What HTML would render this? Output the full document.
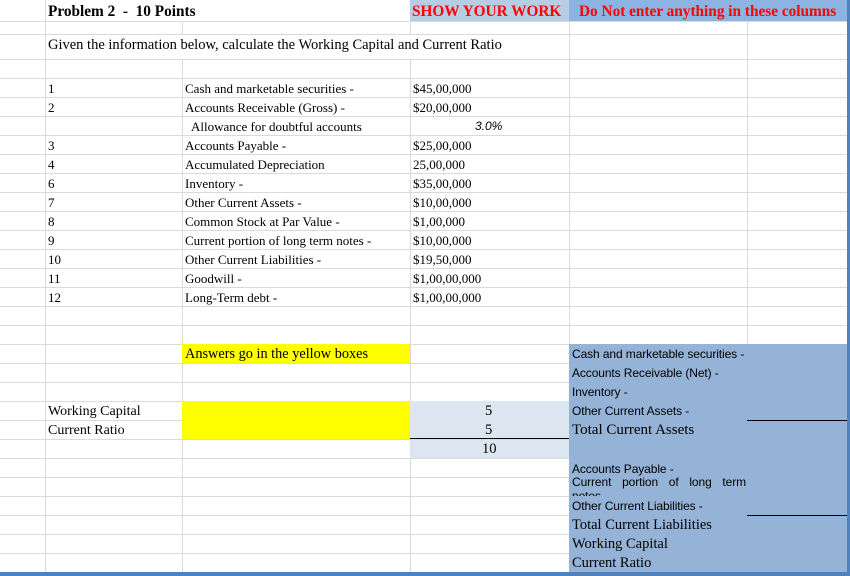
<!DOCTYPE html>
<html><head><style>
body{margin:0;width:850px;height:576px;position:relative;overflow:hidden;background:#fff;font-family:"Liberation Serif",serif;font-size:13px;color:#000}
.h{position:absolute;left:0;width:847px;height:1px;background:#dadada}
.v{position:absolute;top:0;width:1px;height:572px;background:#dadada}
.b{position:absolute}
.t{position:absolute;white-space:nowrap;line-height:19px}
.s{font-family:"Liberation Sans",sans-serif;font-size:12px;letter-spacing:-0.1px}
.big{font-size:14.5px}
.hd{font-weight:bold;font-size:15.3px}
</style></head><body>
<div class="h" style="top:21px"></div><div class="h" style="top:34px"></div><div class="h" style="top:59px"></div>
<div class="h" style="top:78px"></div><div class="h" style="top:97px"></div><div class="h" style="top:116px"></div><div class="h" style="top:135px"></div><div class="h" style="top:154px"></div><div class="h" style="top:173px"></div><div class="h" style="top:192px"></div><div class="h" style="top:211px"></div><div class="h" style="top:230px"></div><div class="h" style="top:249px"></div><div class="h" style="top:268px"></div><div class="h" style="top:287px"></div><div class="h" style="top:306px"></div><div class="h" style="top:325px"></div><div class="h" style="top:344px"></div><div class="h" style="top:363px"></div><div class="h" style="top:382px"></div><div class="h" style="top:401px"></div><div class="h" style="top:420px"></div><div class="h" style="top:439px"></div><div class="h" style="top:458px"></div><div class="h" style="top:477px"></div><div class="h" style="top:496px"></div><div class="h" style="top:515px"></div><div class="h" style="top:534px"></div><div class="h" style="top:553px"></div>
<div class="v" style="left:45px"></div><div class="v" style="left:182px;top:21px;height:13px"></div><div class="v" style="left:182px;top:59px;height:513px"></div><div class="v" style="left:410px"></div><div class="v" style="left:569px"></div><div class="v" style="left:747px"></div>
<div class="b" style="left:410px;top:0;width:159px;height:21px;background:#b8cce4"></div>
<div class="b" style="left:569px;top:0;width:278px;height:21px;background:#8db3e2"></div>
<div class="b" style="left:46px;top:0;width:364px;height:21px;background:#fff"></div>
<div class="b" style="left:46px;top:35px;width:523px;height:24px;background:#fff"></div>
<div class="b" style="left:182px;top:344px;width:228px;height:19px;background:#ffff00"></div>
<div class="b" style="left:182px;top:401px;width:228px;height:38px;background:#ffff00"></div>
<div class="b" style="left:410px;top:401px;width:159px;height:38px;background:#dce6f1"></div>
<div class="b" style="left:410px;top:440px;width:159px;height:18px;background:#dce6f1"></div>
<div class="b" style="left:410px;top:438px;width:159px;height:1px;background:#000"></div>
<div class="b" style="left:569px;top:344px;width:278px;height:228px;background:#95b3d7"></div>
<div class="b" style="left:747px;top:420px;width:100px;height:1px;background:#000"></div>
<div class="b" style="left:747px;top:515px;width:100px;height:1px;background:#000"></div>
<div class="b" style="left:847px;top:0;width:3px;height:576px;background:#4f81bd"></div>
<div class="b" style="left:0;top:572px;width:850px;height:4px;background:#4f81bd"></div>
<div class="t hd" style="left:48px;top:2px">Problem 2 &nbsp;- &nbsp;10 Points</div>
<div class="t hd" style="left:412px;top:2px;color:#f00">SHOW YOUR WORK</div>
<div class="t hd" style="left:579px;top:2px;color:#f00">Do Not enter anything in these columns</div>
<div class="t" style="left:48px;top:36px;font-size:14.5px">Given the information below, calculate the Working Capital and Current Ratio</div>
<div class="t" style="left:48px;top:79px">1</div><div class="t" style="left:185px;top:79px">Cash and marketable securities -</div><div class="t" style="left:413px;top:79px">$45,00,000</div>
<div class="t" style="left:48px;top:98px">2</div><div class="t" style="left:185px;top:98px">Accounts Receivable (Gross) -</div><div class="t" style="left:413px;top:98px">$20,00,000</div>
<div class="t" style="left:191px;top:117px">Allowance for doubtful accounts</div><div class="t" style="left:475px;top:117px;font-style:italic;font-family:'Liberation Sans',sans-serif;font-size:12px">3.0%</div>
<div class="t" style="left:48px;top:136px">3</div><div class="t" style="left:185px;top:136px">Accounts Payable -</div><div class="t" style="left:413px;top:136px">$25,00,000</div>
<div class="t" style="left:48px;top:155px">4</div><div class="t" style="left:185px;top:155px">Accumulated Depreciation</div><div class="t" style="left:413px;top:155px">25,00,000</div>
<div class="t" style="left:48px;top:174px">6</div><div class="t" style="left:185px;top:174px">Inventory -</div><div class="t" style="left:413px;top:174px">$35,00,000</div>
<div class="t" style="left:48px;top:193px">7</div><div class="t" style="left:185px;top:193px">Other Current Assets -</div><div class="t" style="left:413px;top:193px">$10,00,000</div>
<div class="t" style="left:48px;top:212px">8</div><div class="t" style="left:185px;top:212px">Common Stock at Par Value -</div><div class="t" style="left:413px;top:212px">$1,00,000</div>
<div class="t" style="left:48px;top:231px">9</div><div class="t" style="left:185px;top:231px">Current portion of long term notes -</div><div class="t" style="left:413px;top:231px">$10,00,000</div>
<div class="t" style="left:48px;top:250px">10</div><div class="t" style="left:185px;top:250px">Other Current Liabilities -</div><div class="t" style="left:413px;top:250px">$19,50,000</div>
<div class="t" style="left:48px;top:269px">11</div><div class="t" style="left:185px;top:269px">Goodwill -</div><div class="t" style="left:413px;top:269px">$1,00,00,000</div>
<div class="t" style="left:48px;top:288px">12</div><div class="t" style="left:185px;top:288px">Long-Term debt -</div><div class="t" style="left:413px;top:288px">$1,00,00,000</div>
<div class="t" style="left:185px;top:345px;font-size:14.3px">Answers go in the yellow boxes</div>
<div class="t" style="left:48px;top:402px;font-size:14px">Working Capital</div>
<div class="t" style="left:48px;top:421px;font-size:14px">Current Ratio</div>
<div class="t big" style="left:485px;top:402px">5</div>
<div class="t big" style="left:485px;top:421px">5</div>
<div class="t big" style="left:482px;top:440px">10</div>
<div class="t s" style="left:572px;top:345px">Cash and marketable securities -</div>
<div class="t s" style="left:572px;top:364px">Accounts Receivable (Net) -</div>
<div class="t s" style="left:572px;top:383px">Inventory -</div>
<div class="t s" style="left:572px;top:402px">Other Current Assets -</div>
<div class="t" style="left:572px;top:421px;font-size:15px">Total Current Assets</div>
<div class="t s" style="left:572px;top:459px;line-height:17px;top:461px">Accounts Payable -</div>
<div class="b s" style="left:572px;top:475px;width:174px;height:21px;overflow:hidden;line-height:14px;text-align:justify;text-align-last:auto">Current portion of long term notes -</div>
<div class="t s" style="left:572px;top:497px">Other Current Liabilities -</div>
<div class="t big" style="left:572px;top:516px">Total Current Liabilities</div>
<div class="t big" style="left:572px;top:535px">Working Capital</div>
<div class="t big" style="left:572px;top:554px">Current Ratio</div>
</body></html>
